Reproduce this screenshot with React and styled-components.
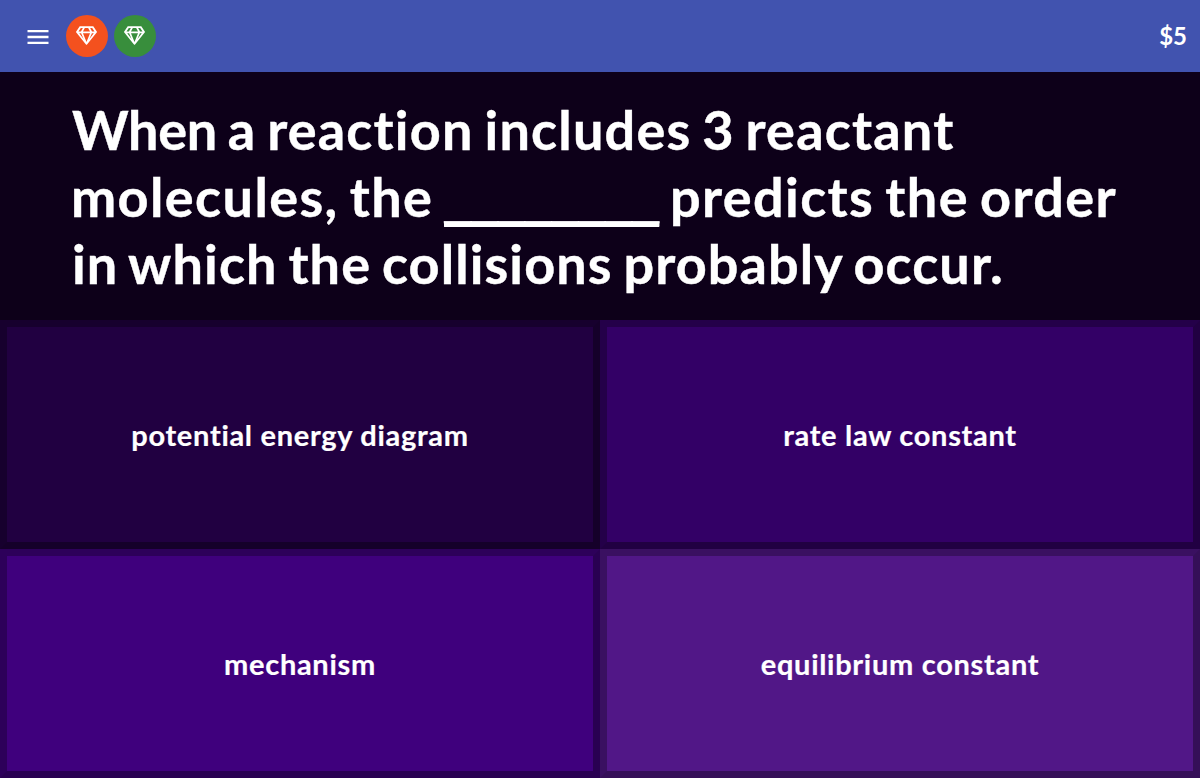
import styled, { createGlobalStyle } from "styled-components";
import { MdMenu } from "react-icons/md";
import { FaRegGem } from "react-icons/fa";

const powerups = [
    { id: 1, color: "#f4511e" },
    { id: 2, color: "#388e3c" },
];

const answers = [
    { text: "potential energy diagram", color: "#210041" },
    { text: "rate law constant", color: "#330066" },
    { text: "mechanism", color: "#3f007d" },
    { text: "equilibrium constant", color: "#511787" },
];

function App() {
    return (
        <>
            <GlobalStyle />
            <Screen>
                <Navbar>
                    <MenuButton type="button" aria-label="Menu">
                        <MdMenu size={28} />
                    </MenuButton>
                    {powerups.map((powerup) => (
                        <Powerup key={powerup.id} type="button" aria-label="Powerup" $color={powerup.color}>
                            <FaRegGem size={21} />
                        </Powerup>
                    ))}
                    <Balance>$5</Balance>
                </Navbar>
                <Question>
                    <Line $spacing="1.2px" $gap="-3.5px" $shift="-1px">
                        <Tight>When</Tight> a reaction includes 3 reactant
                    </Line>
                    <Line $spacing="1.4px" $gap="-3.4px" $shift="-2px">
                        molecules, the <Blank>________</Blank> predicts the order
                    </Line>
                    <Line $spacing="1.1px" $gap="-3.4px" $shift="-1px">in which the collisions probably occur.</Line>
                </Question>
                <Answers>
                    {answers.map((answer) => (
                        <Answer key={answer.text} type="button" $color={answer.color}>
                            {answer.text}
                        </Answer>
                    ))}
                </Answers>
            </Screen>
        </>
    );
}

const GlobalStyle = createGlobalStyle`
    *{
        box-sizing: border-box;
    }
    body{
        margin: 0;
        background: #0d0019;
    }
    button{
        padding: 0;
        border: none;
        color: white;
        cursor: pointer;
    }
`;

const Screen = styled.div`
    height: 778px;
    display: flex;
    flex-direction: column;
    color: white;
    font-family: Lato, 'Open Sans', sans-serif;
    font-weight: 700;
    font-variant-ligatures: none;
`;

const Navbar = styled.nav`
    height: 72px;
    padding: 0 13px 0 23.5px;
    display: flex;
    align-items: center;
    background: #4153af;
`;

const MenuButton = styled.button`
    width: 28px;
    height: 28px;
    margin: 1px 14.5px 0 0;
    background: none;
    svg{
        display: block;
    }
`;

const Powerup = styled.button`
    width: 42px;
    height: 42px;
    margin-right: 6px;
    padding: 0 1px 2px 0;
    display: flex;
    align-items: center;
    justify-content: center;
    border-radius: 50%;
    background: ${(props) => props.$color};
`;

const Balance = styled.span`
    margin-left: auto;
    padding-bottom: 2px;
    font-size: 24px;
`;

const Question = styled.div`
    height: 248px;
    padding: 24px 73px 0;
    background: #0d0019;
    font-size: 54px;
    line-height: 67px;
    -webkit-text-stroke: 0.4px white;
`;

const Line = styled.div`
    margin-left: ${(props) => props.$shift || 0};
    white-space: nowrap;
    letter-spacing: ${(props) => props.$spacing};
    word-spacing: ${(props) => props.$gap};
`;

const Tight = styled.span`
    letter-spacing: -0.3px;
`;

/* the shadows thicken the rule to the weight of the letters */
const Blank = styled.span`
    font-family: 'Liberation Sans', sans-serif;
    font-size: 48.2px;
    line-height: 0;
    letter-spacing: 0;
    text-shadow: 0 1px white, 0 2px white, 0 3px white, 0 4px white;
`;

const Answers = styled.div`
    flex: 1;
    display: grid;
    grid-template-columns: 1fr 1fr;
    grid-template-rows: 1fr 1fr;
`;

const Answer = styled.button`
    && {
        padding-bottom: 1px;
        border: 7px solid;
        border-color: rgba(0, 0, 0, 0.28) rgba(0, 0, 0, 0.34) rgba(0, 0, 0, 0.34) rgba(0, 0, 0, 0.28);
    }
    background: ${(props) => props.$color};
    font-family: inherit;
    font-size: 29px;
    font-weight: 700;
    font-variant-ligatures: none;
    letter-spacing: 0.7px;
    -webkit-text-stroke: 0.2px white;
`;

export default App;
